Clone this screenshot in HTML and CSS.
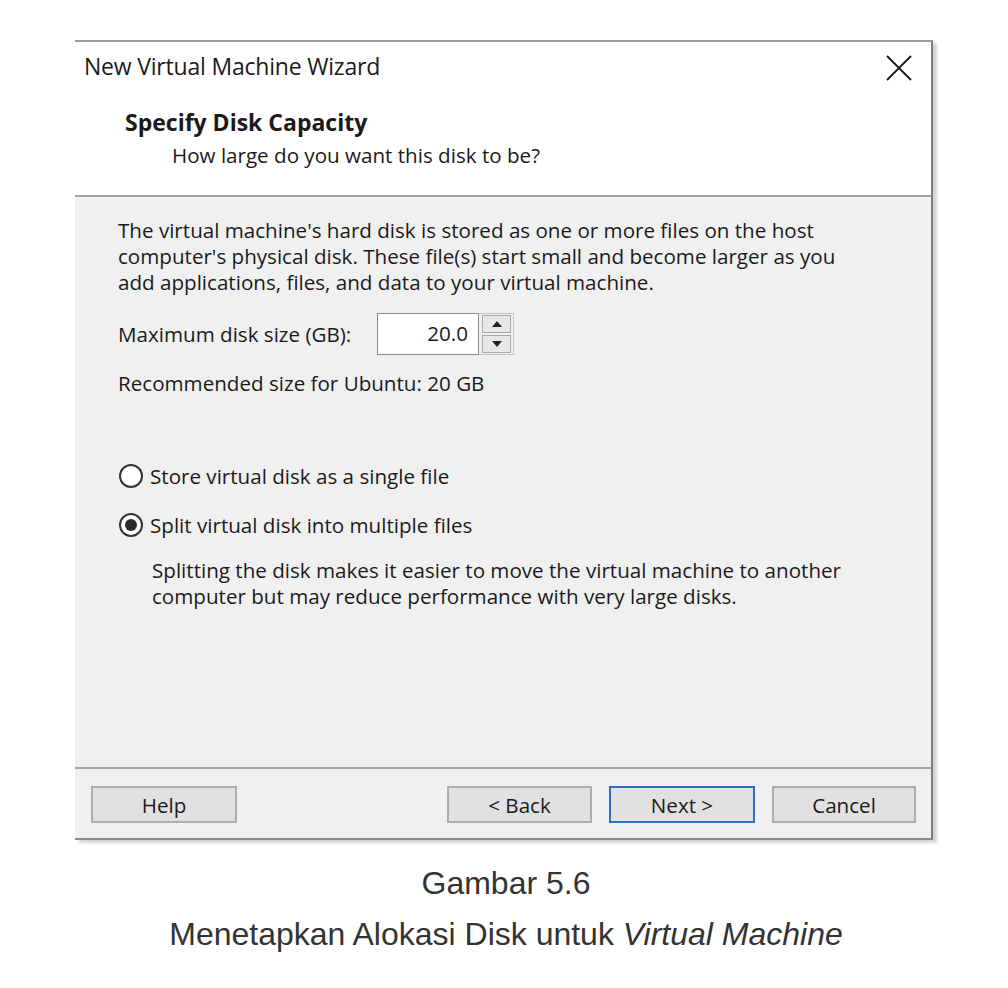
FILE: index.html
```html
<!DOCTYPE html>
<html lang="en">
<head>
<meta charset="utf-8">
<title>New Virtual Machine Wizard</title>
<link rel="stylesheet" href="styles.css">
</head>
<body>
<div class="page">
  <div class="dialog">
    <div class="header">
      <div class="titlebar">
        <span class="title">New Virtual Machine Wizard</span>
        <svg class="close" width="26" height="26" viewBox="0 0 26 26"><path d="M1 1 L25 25 M25 1 L1 25" stroke="#1a1a1a" stroke-width="1.8" fill="none"/></svg>
      </div>
      <div class="heading">Specify Disk Capacity</div>
      <div class="subheading">How large do you want this disk to be?</div>
    </div>
    <div class="body">
      <p class="intro">The virtual machine's hard disk is stored as one or more files on the host<br>computer's physical disk. These file(s) start small and become larger as you<br>add applications, files, and data to your virtual machine.</p>
      <div class="size-row">
        <span class="label">Maximum disk size (GB):</span>
        <div class="spin">
          <div class="spin-value">20.0</div>
          <div class="spin-buttons">
            <div class="spin-btn"><svg width="10" height="6" viewBox="0 0 10 6"><path d="M5 0 L10 6 L0 6 Z" fill="#222"/></svg></div>
            <div class="spin-btn"><svg width="10" height="6" viewBox="0 0 10 6"><path d="M0 0 L10 0 L5 6 Z" fill="#222"/></svg></div>
          </div>
        </div>
      </div>
      <div class="recommend">Recommended size for Ubuntu: 20 GB</div>
      <div class="radio-row first"><span class="radio"></span><span>Store virtual disk as a single file</span></div>
      <div class="radio-row second"><span class="radio checked"></span><span>Split virtual disk into multiple files</span></div>
      <p class="desc">Splitting the disk makes it easier to move the virtual machine to another<br>computer but may reduce performance with very large disks.</p>
    </div>
    <div class="footer">
      <button class="btn help">Help</button>
      <div class="spacer"></div>
      <button class="btn back">&lt; Back</button>
      <button class="btn primary">Next &gt;</button>
      <button class="btn cancel">Cancel</button>
    </div>
  </div>
  <div class="caption">
    <div class="cap-num">Gambar 5.6</div>
    <div class="cap-text">Menetapkan Alokasi Disk untuk <em>Virtual Machine</em></div>
  </div>
</div>
</body>
</html>
```
FILE: styles.css
```css
* { box-sizing: border-box; }
html, body { margin: 0; padding: 0; background: #ffffff; }
body { width: 1008px; height: 988px; overflow: hidden; }

.page { padding-top: 40px; }

.dialog {
  margin-left: 75px;
  width: 858px;
  border-top: 2px solid #9c9c9c;
  border-right: 2px solid #7c7c7c;
  border-bottom: 2px solid #8a8a8a;
  box-shadow: 4px 3px 3px rgba(0,0,0,0.18);
  font-family: "Open Sans", "Noto Sans", sans-serif;
  color: #1a1a1a;
  font-size: 20.6px;
}

.header {
  background: #ffffff;
  height: 155px;
  padding-top: 9px;
  border-bottom: 2px solid #a3a3a3;
}

.titlebar {
  display: flex;
  justify-content: space-between;
  align-items: center;
  height: 30px;
  padding-left: 9px;
  padding-right: 19px;
}
.title { font-size: 23px; line-height: 30px; letter-spacing: -0.2px; }
.close { margin-top: 4px; }

.heading {
  margin-top: 26px;
  padding-left: 50px;
  font-weight: 700;
  font-size: 23px;
  line-height: 30px;
}
.subheading {
  margin-top: 3px;
  padding-left: 97px;
  line-height: 30px;
}

.body {
  background: #f0f0f0;
  height: 570px;
  padding: 20px 0 0 43px;
}

.intro { margin: 0; line-height: 26px; }

.size-row {
  display: flex;
  align-items: center;
  margin-top: 18px;
  height: 42px;
}
.label { width: 259px; }
.spin {
  display: flex;
  height: 42px;
}
.spin-value {
  width: 102px;
  background: #fff;
  border: 1px solid #8a8a8a;
  text-align: right;
  padding-right: 10px;
  line-height: 38px;
}
.spin-buttons {
  display: flex;
  flex-direction: column;
  justify-content: space-between;
  width: 35px;
  padding: 0 2px 0 3px;
  border: 1px solid #c4c4c4;
  border-left: none;
}
.spin-btn {
  height: 19px;
  margin: 1px 0;
  background: #e8e8e8;
  border: 1px solid #a8a8a8;
  display: flex;
  align-items: center;
  justify-content: center;
}

.recommend { margin-top: 15px; line-height: 26px; }

.radio-row {
  display: flex;
  align-items: center;
  height: 30px;
  gap: 7px;
  padding-left: 1px;
}
.radio-row.first { margin-top: 65px; }
.radio-row.second { margin-top: 19px; }
.radio {
  width: 24px;
  height: 24px;
  border-radius: 50%;
  border: 2px solid #333;
  background: #fff;
  display: flex;
  align-items: center;
  justify-content: center;
}
.radio.checked::after {
  content: "";
  width: 12px;
  height: 12px;
  border-radius: 50%;
  background: #2a2a2a;
}

.desc { margin: 17px 0 0 34px; line-height: 26px; }

.footer {
  background: #f0f0f0;
  height: 71px;
  border-top: 2px solid #a3a3a3;
  display: flex;
  align-items: flex-start;
  padding: 17px 15px 0 16px;
  gap: 17px;
}
.spacer { flex: 1; }
.btn {
  width: 145px;
  height: 37px;
  background: #e1e1e1;
  border: 2px solid #adadad;
  font-family: "Open Sans", "Noto Sans", sans-serif;
  font-size: 20.6px;
  color: #1a1a1a;
  padding: 0;
  margin: 0;
}
.btn.help { width: 146px; }
.btn.primary { border-color: #2a6fc4; width: 146px; }
.btn.cancel { width: 144px; }

.caption {
  margin-top: 18px;
  text-align: center;
  font-family: "Liberation Sans", Arial, sans-serif;
  color: #333;
  font-size: 32px;
  padding-left: 4px;
}
.cap-num { line-height: 50px; }
.cap-text { line-height: 52px; }
.cap-text em { font-style: italic; }
```
